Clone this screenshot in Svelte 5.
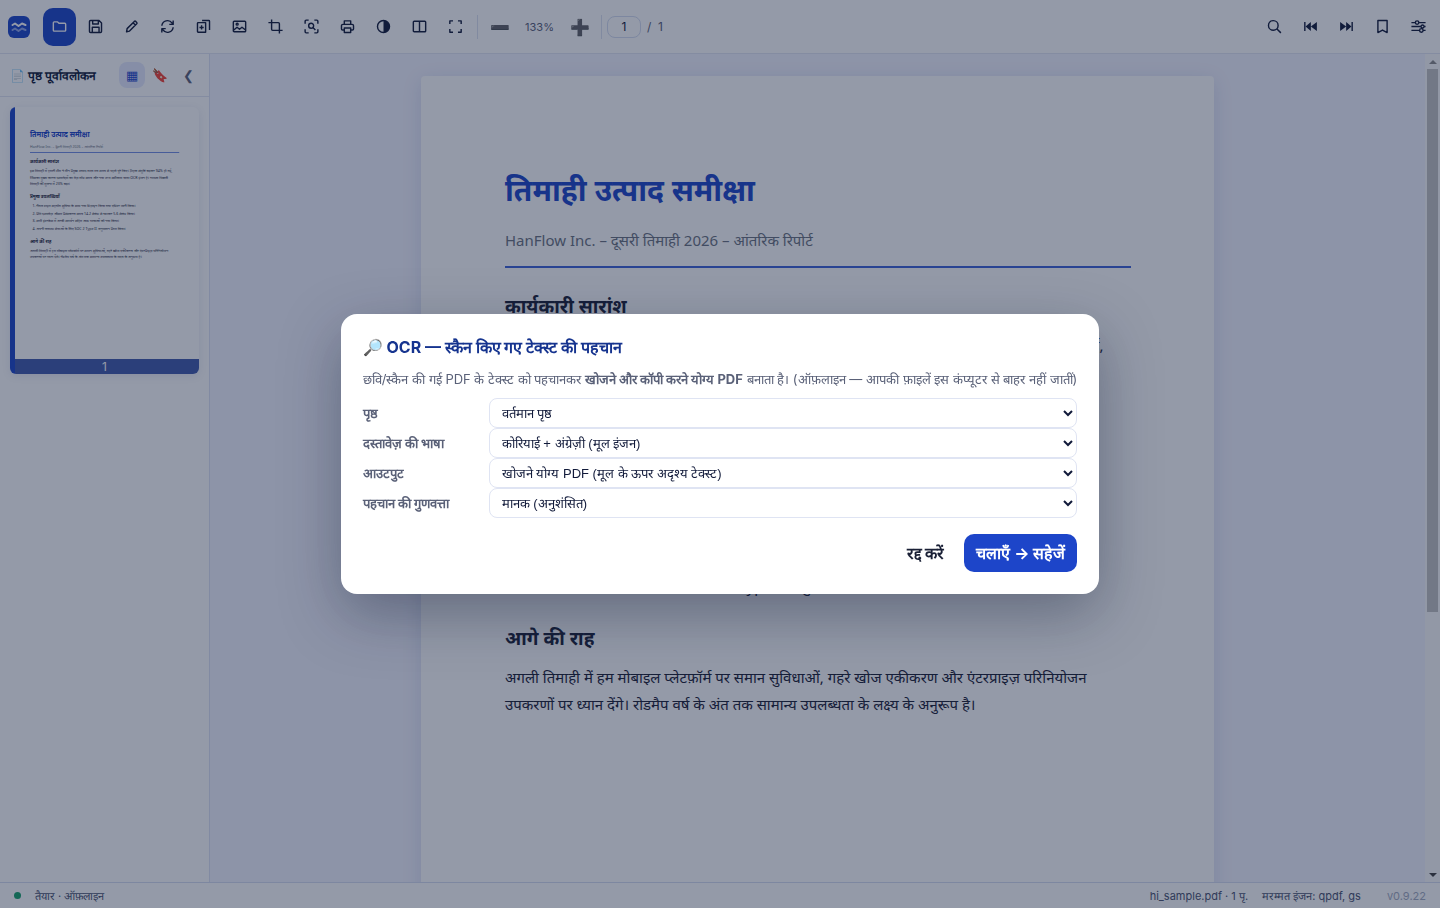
<script>
	const folder = 'M4.5 5.5h4.8l2 2h8.2a1.2 1.2 0 0 1 1.2 1.2v8.6a1.2 1.2 0 0 1-1.2 1.2h-15a1.2 1.2 0 0 1-1.2-1.2V6.7a1.2 1.2 0 0 1 1.2-1.2z';

	// d = stroked outline, f = filled shape, both on a 24 unit grid
	const tools = [
		{ name: 'खोलें', active: true, d: folder },
		{ name: 'सहेजें', d: 'M5 3.5h12L20.5 7v12a1.5 1.5 0 0 1-1.5 1.5H5A1.5 1.5 0 0 1 3.5 19V5A1.5 1.5 0 0 1 5 3.5zM8 4v4.5h8V4M7.5 20v-7H17v7' },
		{ name: 'संपादित करें', d: 'M5 19.5l.8-4.5L16 4.8a1.5 1.5 0 0 1 2 0l1.4 1.4a1.5 1.5 0 0 1 0 2L9.2 18.5zM14.5 7l3 3' },
		{ name: 'घुमाएँ', d: 'M4 11a8 8 0 0 1 14.5-3.8L20 9M20 3.5V9h-5.5M20 13a8 8 0 0 1-14.5 3.8L4 15M4 20.5V15h5.5' },
		{ name: 'पृष्ठ जोड़ें', d: 'M4.5 6.5H15V20H4.5a1 1 0 0 1-1-1V7.5a1 1 0 0 1 1-1zM9.3 10.3v6M6.3 13.3h6M10 3.5h9.5a1 1 0 0 1 1 1V17' },
		{ name: 'छवि', d: 'M4.5 4.5h15a1.2 1.2 0 0 1 1.2 1.2v12.6a1.2 1.2 0 0 1-1.2 1.2h-15a1.2 1.2 0 0 1-1.2-1.2V5.7a1.2 1.2 0 0 1 1.2-1.2zM4 17l4.5-4 3.5 3 3.5-3 5 4M7.3 8.7a1.4 1.4 0 1 0 2.8 0a1.4 1.4 0 1 0-2.8 0' },
		{ name: 'काटें', d: 'M6.5 2v14A1.5 1.5 0 0 0 8 17.5h14M2 6.5h14A1.5 1.5 0 0 1 17.5 8v14' },
		{ name: 'OCR', d: 'M3 8V4.5A1.5 1.5 0 0 1 4.5 3H8M16 3h3.5A1.5 1.5 0 0 1 21 4.5V8M21 16v3.5a1.5 1.5 0 0 1-1.5 1.5H16M8 21H4.5A1.5 1.5 0 0 1 3 19.5V16M8 11a3.5 3.5 0 1 0 7 0a3.5 3.5 0 1 0-7 0M14 13.5l3.5 3.5' },
		{ name: 'प्रिंट', d: 'M7.5 9V4h9v5M7.5 17H5a1.5 1.5 0 0 1-1.5-1.5V11a2 2 0 0 1 2-2h13a2 2 0 0 1 2 2v4.5A1.5 1.5 0 0 1 19 17h-2.5M7.5 14h9v6.5h-9z' },
		{ name: 'कंट्रास्ट', d: 'M3.5 12a8.5 8.5 0 1 0 17 0a8.5 8.5 0 1 0-17 0', f: 'M12 3.5a8.5 8.5 0 0 1 0 17z' },
		{ name: 'दो पृष्ठ', d: 'M4.5 4.5h15a1.2 1.2 0 0 1 1.2 1.2v12.6a1.2 1.2 0 0 1-1.2 1.2h-15a1.2 1.2 0 0 1-1.2-1.2V5.7A1.2 1.2 0 0 1 4.5 4.5zM12 5v14' },
		{ name: 'पूर्ण स्क्रीन', d: 'M4 8.5V4h4.5M15.5 4H20v4.5M20 15.5V20h-4.5M8.5 20H4v-4.5' }
	];

	const navTools = [
		{ name: 'खोजें', d: 'M3.5 10.5a6.8 6.8 0 1 0 13.6 0a6.8 6.8 0 1 0-13.6 0M15.5 15.5L21 21' },
		{ name: 'पहला पृष्ठ', d: 'M4 5.5v13', f: 'M12.5 5.5v13L5 12zM21 5.5v13L12.5 12z' },
		{ name: 'अंतिम पृष्ठ', d: 'M20 5.5v13', f: 'M3 5.5v13l8.5-6.5zM11.5 5.5v13L19 12z' },
		{ name: 'बुकमार्क', d: 'M5.5 3.5h13v17L12 17l-6.500 3.500z' },
		{ name: 'सेटिंग', d: 'M2 6.5h5.5M12.5 6.5H22M2 12h13.5M20 12h2M2 17.5h11.5M18.5 17.5H22M7.5 6.5a2.5 2.5 0 1 0 5 0a2.5 2.5 0 1 0-5 0M15.5 12a2.2 2.2 0 1 0 4.4 0a2.2 2.2 0 1 0-4.4 0M13.5 17.5a2.5 2.5 0 1 0 5 0a2.5 2.5 0 1 0-5 0' }
	];

	const title = 'तिमाही उत्पाद समीक्षा';
	const subtitle = 'HanFlow Inc. – दूसरी तिमाही 2026 – आंतरिक रिपोर्ट';
	const summary = [
		'इस तिमाही में हमारी टीम ने तीन प्रमुख उत्पाद लक्ष्य तय समय से पहले पूरे किए। ग्राहक संतुष्टि बढ़कर 94% हो गई,',
		'जिसका मुख्य कारण दस्तावेज़ों का तेज़ लोड समय और नया उच्च सटीकता वाला OCR इंजन है। राजस्व पिछली',
		'तिमाही की तुलना में 23% बढ़ा।'
	];
	const wins = [
		'रीयल टाइम सहयोग सुविधा के साथ नया डिज़ाइन किया गया एडिटर जारी किया।',
		'प्रति दस्तावेज़ औसत प्रसंस्करण समय 14.2 सेकंड से घटाकर 5.6 सेकंड किया।',
		'सभी इंटरफ़ेस में अरबी समर्थन सहित आठ भाषाओं को नया किया।',
		'अपनी क्लाउड सेवाओं के लिए SOC 2 Type II अनुपालन प्राप्त किया।'
	];
	const ahead = [
		'अगली तिमाही में हम मोबाइल प्लेटफ़ॉर्म पर समान सुविधाओं, गहरे खोज एकीकरण और एंटरप्राइज़ परिनियोजन',
		'उपकरणों पर ध्यान देंगे। रोडमैप वर्ष के अंत तक सामान्य उपलब्धता के लक्ष्य के अनुरूप है।'
	];

	const fields = [
		{ id: 'pages', label: 'पृष्ठ', options: ['वर्तमान पृष्ठ', 'सभी पृष्ठ'] },
		{ id: 'lang', label: 'दस्तावेज़ की भाषा', options: ['कोरियाई + अंग्रेज़ी (मूल इंजन)'] },
		{ id: 'output', label: 'आउटपुट', options: ['खोजने योग्य PDF (मूल के ऊपर अदृश्य टेक्स्ट)'] },
		{ id: 'quality', label: 'पहचान की गुणवत्ता', options: ['मानक (अनुशंसित)'] }
	];

	let page = $state('1');
	let open = $state(true);
</script>

{#snippet tool(t)}
	<button class="tool" class:active={t.active} aria-label={t.name}>
		<svg viewBox="0 0 24 24">
			<path d={t.d} />
			{#if t.f}
				<path class="solid" d={t.f} />
			{/if}
		</svg>
	</button>
{/snippet}

<div class="app">
	<header>
		<svg class="logo" viewBox="0 0 22 22">
			<rect width="22" height="22" rx="6" fill="#1d45c9" />
			<path d="M4.5 9l2.5-1.5 3.500 2.500 3.500-2.500 3.500 1.500" stroke="#fff" />
			<path d="M4.5 14l2.500-1.500 3.500 2.500 3.500-2.500 3.500 1.500" stroke="#8ea5ea" />
		</svg>
		{#each tools as t}
			{@render tool(t)}
		{/each}
		<span class="sep"></span>
		<button class="zoom" aria-label="छोटा करें">➖</button>
		<span class="percent">133%</span>
		<button class="zoom" aria-label="बड़ा करें">➕</button>
		<span class="sep"></span>
		<input class="page-input" aria-label="पृष्ठ संख्या" bind:value={page} />
		<span class="total">/&nbsp; 1</span>
		<div class="right">
			{#each navTools as t}
				{@render tool(t)}
			{/each}
		</div>
	</header>

	<div class="body">
		<aside>
			<div class="side-head">
				<h2>📄 पृष्ठ पूर्वावलोकन</h2>
				<button class="tab on" aria-label="थंबनेल">▦</button>
				<button class="tab" aria-label="बुकमार्क">🔖</button>
				<button class="tab" aria-label="बंद करें">❮</button>
			</div>
			<button class="thumb" aria-label="पृष्ठ 1">
				<svg viewBox="0 0 793 1121">
					<text class="t-title" x="84" y="124">{title}</text>
					<text class="t-sub" x="84" y="170">{subtitle}</text>
					<rect x="84" y="189" width="626" height="3" fill="#3c62d8" />
					<text class="t-head" x="84" y="236">कार्यकारी सारांश</text>
					{#each summary as line, i}
						<text x="84" y={273 + i * 27}>{line}</text>
					{/each}
					<text class="t-head" x="84" y="382">प्रमुख उपलब्धियाँ</text>
					{#each wins as line, i}
						<text x="94" y={420 + i * 32}>{i + 1}.</text>
						<text x="110" y={420 + i * 32}>{line}</text>
					{/each}
					<text class="t-head" x="84" y="569">आगे की राह</text>
					{#each ahead as line, i}
						<text x="84" y={607 + i * 27}>{line}</text>
					{/each}
				</svg>
				<span class="num">1</span>
			</button>
		</aside>

		<main>
			<div class="canvas">
				<article>
					<h1>{title}</h1>
					<p class="subtitle">{subtitle}</p>
					<h3>कार्यकारी सारांश</h3>
					<p>{#each summary as line}{line}<br />{/each}</p>
					<h3>प्रमुख उपलब्धियाँ</h3>
					<ol>
						{#each wins as line}
							<li>{line}</li>
						{/each}
					</ol>
					<h3>आगे की राह</h3>
					<p>{#each ahead as line}{line}<br />{/each}</p>
				</article>
			</div>
			<div class="scrollbar">
				<span class="arrow up"></span>
				<span class="track"><span class="grip"></span></span>
				<span class="arrow down"></span>
			</div>
		</main>
	</div>

	<footer>
		<span class="dot"></span>
		<span>तैयार · ऑफ़लाइन</span>
		<span class="file">hi_sample.pdf · 1 पृ.</span>
		<span>मरम्मत इंजन: qpdf, gs</span>
		<span class="version">v0.9.22</span>
	</footer>
</div>

{#if open}
	<div class="overlay">
		<div class="modal" role="dialog" aria-modal="true" aria-labelledby="ocr-title">
			<h2 id="ocr-title">🔎 OCR — स्कैन किए गए टेक्स्ट की पहचान</h2>
			<p class="hint">
				छवि/स्कैन की गई PDF के टेक्स्ट को पहचानकर <b>खोजने और कॉपी करने योग्य PDF</b> बनाता है। (ऑफ़लाइन — आपकी फ़ाइलें इस कंप्यूटर से बाहर नहीं जातीं)
			</p>
			{#each fields as field}
				<div class="row">
					<label for={field.id}>{field.label}</label>
					<select id={field.id}>
						{#each field.options as option}
							<option>{option}</option>
						{/each}
					</select>
				</div>
			{/each}
			<div class="actions">
				<button onclick={() => (open = false)}>रद्द करें</button>
				<button class="primary">चलाएँ → सहेजें</button>
			</div>
		</div>
	</div>
{/if}

<style>
	:global(body) {
		margin: 0;
	}

	.app {
		display: flex;
		flex-direction: column;
		height: 100vh;
		overflow: hidden;
		background: #fff;
		color: #111a3a;
		font-family: Inter, sans-serif;
		font-size: 12px;
	}

	button,
	input {
		font-family: inherit;
		color: inherit;
	}

	button {
		padding: 0;
		border: 0;
		background: none;
	}

	header {
		display: flex;
		align-items: center;
		flex: none;
		height: 53px;
		padding: 0 5px 0 8px;
		border-bottom: 1px solid #e2e6f3;
		gap: 3px;
	}

	.logo {
		width: 22px;
		height: 22px;
		margin-right: 10px;
		fill: none;
		stroke-width: 2;
		stroke-linecap: round;
		stroke-linejoin: round;
	}

	.tool {
		display: flex;
		align-items: center;
		justify-content: center;
		width: 33px;
		height: 38px;
		border-radius: 10px;
	}

	.tool.active {
		background: #1d45c9;
		color: #fff;
	}

	.tool svg {
		width: 17px;
		height: 17px;
		fill: none;
		stroke: currentColor;
		stroke-width: 2;
		stroke-linejoin: round;
	}

	.tool .solid {
		fill: currentColor;
		stroke: none;
	}

	.sep {
		width: 1px;
		height: 24px;
		margin: 0 2px;
		background: #dde2f0;
	}

	.zoom {
		width: 33px;
		height: 38px;
		font-size: 16px;
	}

	.percent {
		width: 41px;
		text-align: center;
		color: #5a6178;
		font-size: 11px;
	}

	.page-input {
		box-sizing: border-box;
		width: 34px;
		height: 22px;
		padding: 0;
		border: 1px solid #d5ddf0;
		border-radius: 8px;
		background: #fff;
		font-size: 12px;
		text-align: center;
	}

	.total {
		margin-left: 3px;
		color: #5a6178;
	}

	.right {
		display: flex;
		gap: 3px;
		margin-left: auto;
	}

	.body {
		display: flex;
		flex: 1;
		min-height: 0;
	}

	aside {
		flex: none;
		width: 209px;
		border-right: 1px solid #dde2f5;
	}

	.side-head {
		display: flex;
		align-items: center;
		gap: 2px;
		height: 42px;
		padding: 0 8px 0 10px;
		border-bottom: 1px solid #e2e6f3;
	}

	.side-head h2 {
		flex: 1;
		margin: 0;
		font-size: 12px;
		font-weight: 700;
		white-space: nowrap;
	}

	.tab {
		width: 26px;
		height: 26px;
		border-radius: 8px;
		color: #5a6178;
		font-size: 13px;
	}

	.tab.on {
		background: #e6eafe;
		color: #1d45c9;
	}

	.thumb {
		position: relative;
		display: block;
		width: 189px;
		margin: 10px;
		border-radius: 6px;
		overflow: hidden;
		box-shadow: 0 2px 8px rgba(20, 40, 120, 0.1);
	}

	.thumb::before {
		content: '';
		position: absolute;
		inset: 0 auto 0 0;
		width: 5px;
		background: #1d45c9;
	}

	.thumb svg {
		display: block;
		width: 100%;
		font-family: 'Noto Sans', sans-serif;
		font-size: 15px;
		fill: #1a2036;
	}

	.thumb .t-title {
		font-size: 30px;
		font-weight: 700;
		fill: #1d45c9;
	}

	.thumb .t-sub {
		fill: #6b7280;
	}

	.thumb .t-head {
		font-size: 19px;
		font-weight: 700;
	}

	.num {
		position: absolute;
		inset: auto 0 0 5px;
		padding-right: 5px;
		background: #415aab;
		color: #fff;
		font-size: 12px;
		line-height: 15px;
		text-align: center;
	}

	main {
		display: flex;
		flex: 1;
		min-width: 0;
		background: #f3f4ff;
	}

	.canvas {
		flex: 1;
		padding-top: 22px;
		overflow: hidden;
	}

	article {
		box-sizing: border-box;
		max-width: 793px;
		min-height: 1121px;
		margin: 0 auto;
		padding: 84px 83px 84px 84px;
		border-radius: 4px;
		background: #fff;
		box-shadow: 0 4px 20px rgba(20, 40, 120, 0.12);
		color: #1a2036;
		font-family: 'Noto Sans', sans-serif;
		font-size: 15px;
		line-height: 27px;
	}

	article h1 {
		margin: 0;
		color: #1d45c9;
		font-size: 30px;
		line-height: 60px;
	}

	article p {
		margin: 0;
		white-space: nowrap;
	}

	article .subtitle {
		margin: 7px 0 22px;
		padding-bottom: 12px;
		border-bottom: 2px solid #3c62d8;
		color: #6b7280;
	}

	article h3 {
		margin: 0 0 12px;
		font-size: 19px;
		line-height: 28px;
	}

	article p + h3,
	article ol + h3 {
		margin-top: 24px;
	}

	article ol {
		margin: 0;
		padding-left: 26px;
	}

	article li {
		margin-bottom: 5px;
	}

	.scrollbar {
		display: flex;
		flex-direction: column;
		align-items: center;
		width: 15px;
		background: #fcfcfc;
	}

	.arrow {
		width: 0;
		margin: 6px 0 5px;
		border: 4px solid transparent;
	}

	.up {
		border-top: 0;
		border-bottom-color: #8b8b8b;
	}

	.down {
		border-bottom: 0;
		border-top-color: #404040;
	}

	.track {
		flex: 1;
		width: 11px;
	}

	.grip {
		display: block;
		height: 68%;
		background: #c1c1c1;
	}

	footer {
		display: flex;
		align-items: center;
		flex: none;
		gap: 14px;
		height: 25px;
		padding: 0 14px;
		border-top: 1px solid #d5ddf0;
		color: #4a5270;
		font-size: 11px;
	}

	.dot {
		width: 7px;
		height: 7px;
		border-radius: 50%;
		background: #16a36a;
	}

	.file {
		margin-left: auto;
	}

	.version {
		margin-left: 12px;
		color: #a3abc0;
	}

	.overlay {
		position: fixed;
		inset: 0;
		display: flex;
		align-items: center;
		justify-content: center;
		background: rgba(17, 30, 62, 0.45);
	}

	.modal {
		box-sizing: border-box;
		max-width: 92vw;
		padding: 22px;
		border-radius: 16px;
		background: #fff;
		box-shadow: 0 20px 60px rgba(10, 20, 50, 0.35);
		color: #1a2036;
		font-family: Inter, sans-serif;
		font-size: 13px;
	}

	.modal h2 {
		margin: 0 0 10px;
		color: #16348f;
		font-size: 16px;
		line-height: 22px;
	}

	.hint {
		margin: 0 0 8px;
		color: #5a6178;
		line-height: 22px;
	}

	.row {
		display: flex;
		align-items: center;
	}

	.row label {
		width: 126px;
		color: #5a6178;
		font-weight: 600;
	}

	.row select {
		flex: 1;
		height: 30px;
		padding: 0 8px;
		border: 1px solid #dfe4f3;
		border-radius: 8px;
		background: #fff;
		color: #111a3a;
		font-family: 'Liberation Sans', sans-serif;
		font-size: 13px;
	}

	.actions {
		display: flex;
		justify-content: flex-end;
		gap: 8px;
		margin-top: 16px;
	}

	.actions button {
		height: 38px;
		padding: 0 12px;
		border-radius: 10px;
		font-size: 16px;
		font-weight: 700;
	}

	.actions .primary {
		background: #1d45c9;
		color: #fff;
	}
</style>
